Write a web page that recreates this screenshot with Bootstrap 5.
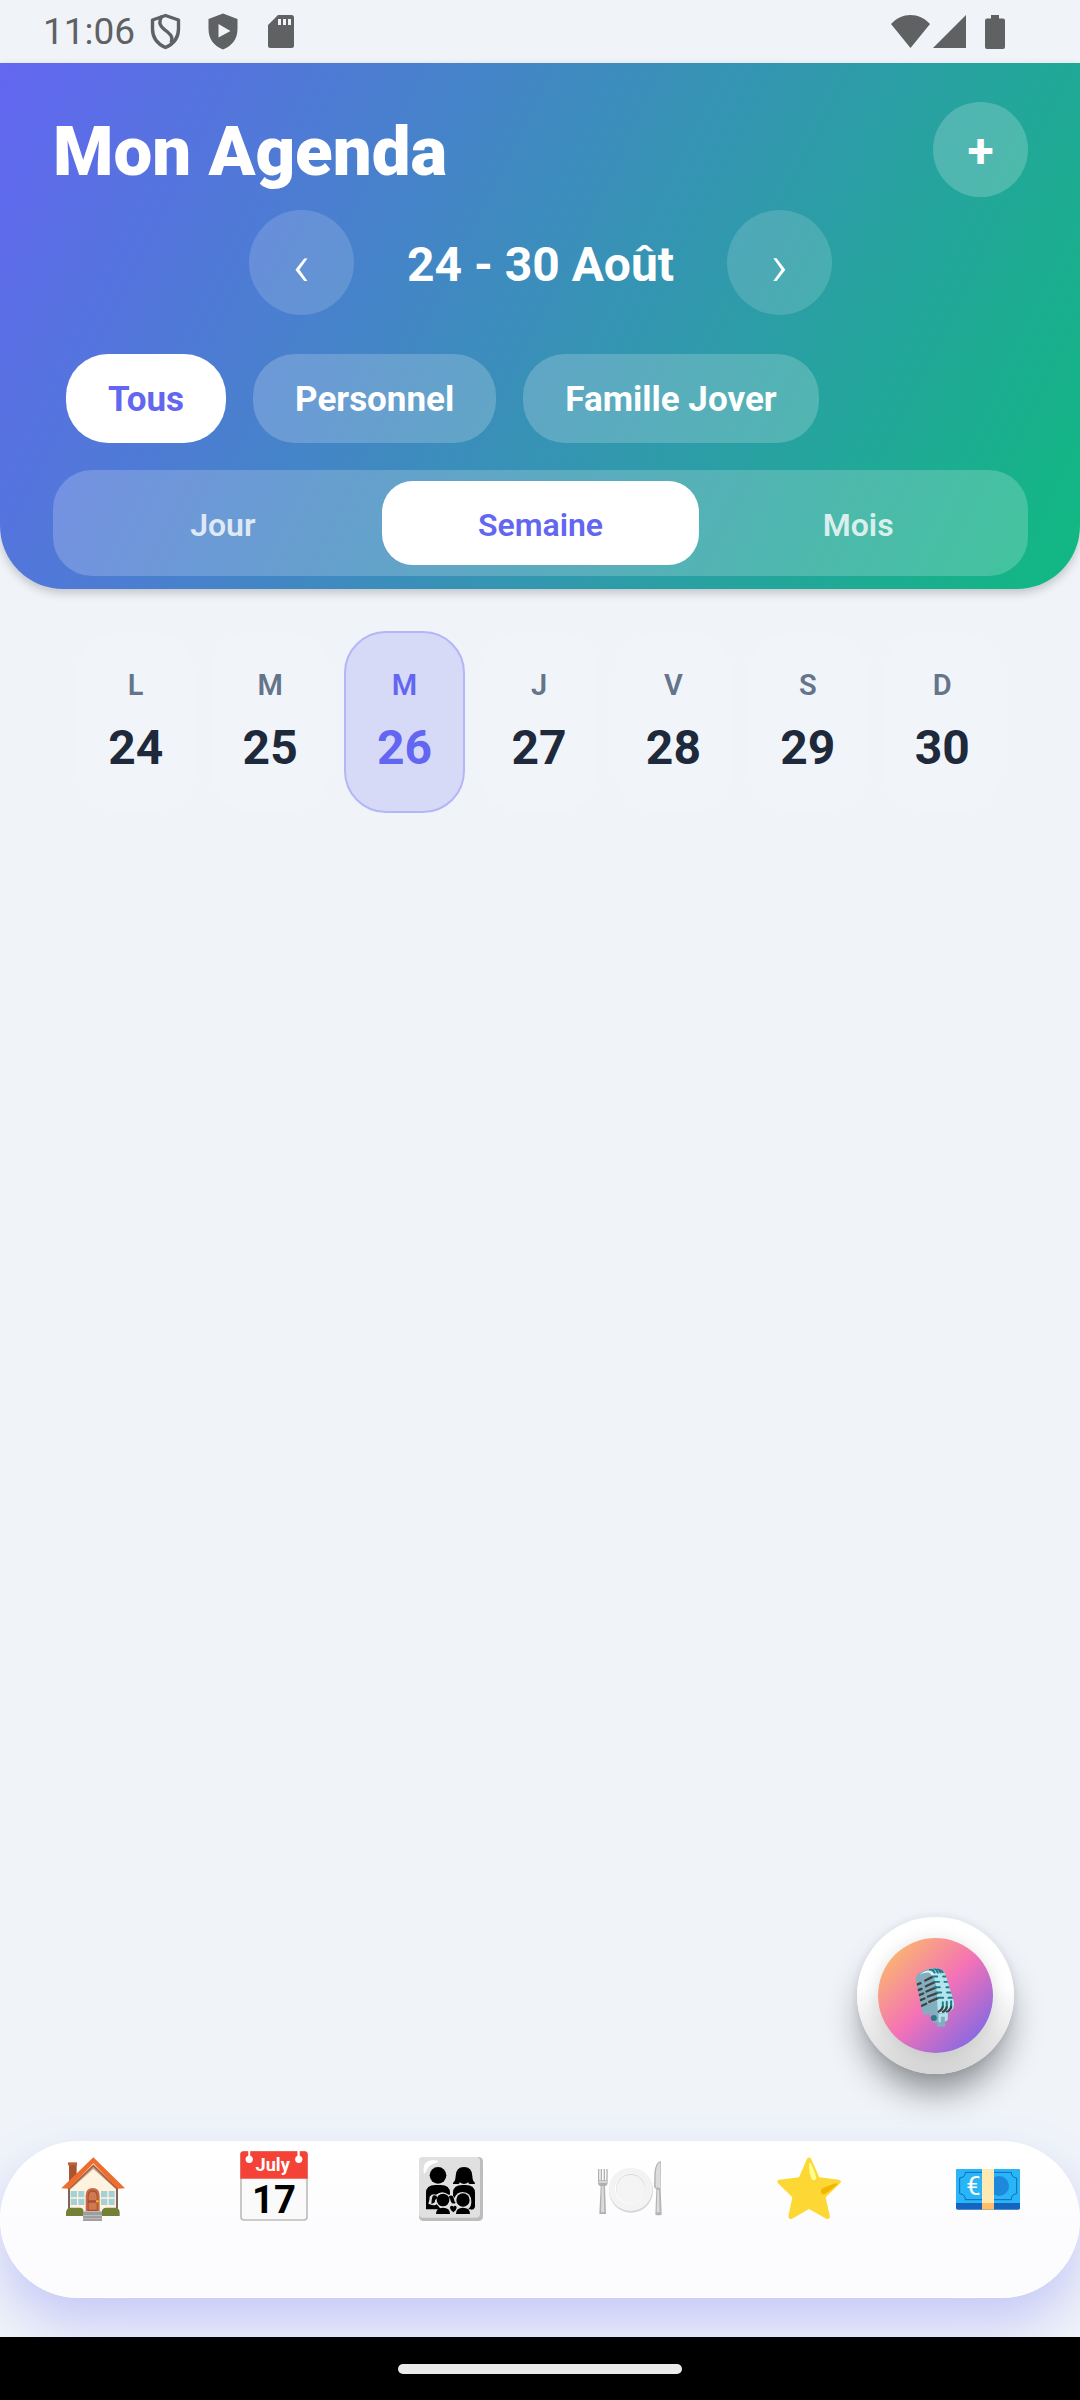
<!DOCTYPE html>
<html lang="fr">
<head>
<meta charset="utf-8">
<meta name="viewport" content="width=device-width, initial-scale=1">
<title>Mon Agenda</title>
<link href="https://cdn.jsdelivr.net/npm/bootstrap@5.3.0/dist/css/bootstrap.min.css" rel="stylesheet">
<style>
  body { background: #f0f4f9; color: #1e293b; font-family: Roboto, "Liberation Sans", sans-serif; }
  button { border: 0; background: none; padding: 0; color: inherit; }
  svg { display: block; }
  .statusbar { height: 63px; padding: 0 75px 0 43px; color: #5f6163; }
  .clock { font-size: 37px; line-height: 63px; }
  .status-icons { margin-left: 15px; }
  .agenda-head { padding: 39px 52px 13px 53px; border-radius: 0 0 63px 63px; color: #fff;
    background: linear-gradient(116deg, #6366f1, #10b981); box-shadow: 0 4px 10px rgba(0,0,0,.2); }
  .agenda-title { font-size: 69px; line-height: 80px; font-weight: 900; padding-top: 5px; }
  .round-btn { width: 105px; height: 105px; padding-top: 6px; border-radius: 50%; background: rgba(255,255,255,.15); font-size: 60px; line-height: 1; font-weight: 300; }
  .add-btn { width: 95px; height: 95px; padding-top: 2px; background: rgba(255,255,255,.2); font-size: 48px; font-weight: 700; }
  .period { margin-top: 13px; gap: 53px; }
  .period-label { font-size: 48px; line-height: 56px; font-weight: 700; padding-top: 4px; }
  .filters { margin: 39px 13px 27px; gap: 27px; }
  .filter-btn { height: 89px; padding: 4px 42px 0; border-radius: 42px; background: rgba(255,255,255,.2); font-size: 35px; font-weight: 700; }
  .views { padding: 11px; border-radius: 39px; background: rgba(255,255,255,.2); }
  .view-btn { flex: 1 1 0; height: 84px; padding-top: 4px; border-radius: 31px; font-size: 32px; font-weight: 600; color: rgba(255,255,255,.8); }
  .filter-btn.active, .view-btn.active { background: #fff; color: #6366f1; }
  .week { padding: 42px 77px 42px 75px; gap: 13px; }
  .day-btn { flex: 1 1 0; height: 182px; gap: 18px; border-radius: 42px; background: #f1f5f9; border: 2px solid #f0f4f9; }
  .day-name { font-size: 29px; line-height: 34px; font-weight: 600; color: #64748b; }
  .day-num { font-size: 48px; line-height: 56px; font-weight: 700; }
  .day-btn.active { background: #d6daf7; border-color: #b3b6f7; color: #6366f1; }
  .day-btn.active .day-name { color: #6366f1; }
  .mic-btn { position: fixed; right: 66px; bottom: 326px; width: 157px; height: 157px; border-radius: 50%; z-index: 3;
    background: linear-gradient(#fff 45%, #d6d6d6); box-shadow: 0 24px 34px -6px rgba(0,0,0,.42), 0 0 10px rgba(60,70,110,.1); }
  .mic-core { width: 115px; height: 115px; border-radius: 50%; background: linear-gradient(135deg, #fcc95c, #f472b6 50%, #6366f1);
    box-shadow: 0 4px 14px 4px rgba(110,120,115,.18); }
  .dock { height: 157px; margin-bottom: 39px; padding: 15px 2px 0; border-radius: 79px; border: 1px solid #fff;
    background: linear-gradient(#fff, #fcfcfe 60%); box-shadow: 0 26px 52px rgba(99,102,241,.3); }
  .dock-link { flex: 1 1 0; }
  .dock-current { margin-top: -6px; }
  .dock-current svg { margin-left: 5px; }
  .gesture { height: 63px; background: #000; position: relative; z-index: 2; }
  .gesture-pill { width: 284px; height: 10px; border-radius: 5px; background: #ebebeb; }
</style>
</head>
<body>
<div class="d-flex flex-column min-vh-100 overflow-hidden">
  <div class="statusbar d-flex align-items-center justify-content-between">
    <div class="d-flex align-items-center">
      <span class="clock">11:06</span>
      <svg class="status-icons" width="144" height="38" viewBox="150 13 144 38" fill="currentColor" aria-hidden="true">
        <path d="M165.500 15.500 178.500 20v9c0 9-5 15-13 18.500-8-3.500-13-9.500-13-18.500v-9z" fill="none" stroke="currentColor" stroke-width="3.400" stroke-linejoin="round"/>
        <path d="M162 16c-4 7-2 10 3 14s9 7 6 13" fill="none" stroke="currentColor" stroke-width="3.400"/>
        <path fill-rule="evenodd" d="M223 13.500 237.500 19v10c0 10-5.500 17-14.500 20.500-9-3.500-14.500-10.500-14.500-20.500V19zM218.500 24v13.500L230.500 31z"/>
        <path fill-rule="evenodd" d="M278 15h13.500q2.500 0 2.500 2.500v28q0 2.500-2.500 2.500h-21q-2.500 0-2.500-2.500V25zM278 19v6h3v-6zm5 0v6h3v-6zm5 0v6h3v-6z"/>
      </svg>
    </div>
    <svg width="114" height="36" viewBox="891 13 114 36" fill="currentColor" aria-hidden="true">
      <path d="M891 23c11-12 28-12 39 0L910.500 47z"/><path d="M966 14v33h-33z"/>
      <path d="M991 14h8v3.500h4q2 0 2 2V46q0 2-2 2h-16q-2 0-2-2V19.500q0-2 2-2h4z"/>
    </svg>
  </div>

  <header class="agenda-head">
    <div class="d-flex justify-content-between align-items-center">
      <h1 class="agenda-title mb-0">Mon Agenda</h1>
      <button type="button" class="round-btn add-btn" aria-label="Ajouter">+</button>
    </div>
    <div class="period d-flex justify-content-center align-items-center">
      <button type="button" class="round-btn" aria-label="Semaine précédente">‹</button>
      <h2 class="period-label mb-0">24 - 30 Août</h2>
      <button type="button" class="round-btn" aria-label="Semaine suivante">›</button>
    </div>
    <div class="filters d-flex">
      <button type="button" class="filter-btn active">Tous</button>
      <button type="button" class="filter-btn">Personnel</button>
      <button type="button" class="filter-btn">Famille Jover</button>
    </div>
    <div class="views d-flex">
      <button type="button" class="view-btn">Jour</button>
      <button type="button" class="view-btn active">Semaine</button>
      <button type="button" class="view-btn">Mois</button>
    </div>
  </header>

  <main class="week d-flex">
    <button type="button" class="day-btn d-flex flex-column align-items-center justify-content-center"><span class="day-name">L</span><span class="day-num">24</span></button>
    <button type="button" class="day-btn d-flex flex-column align-items-center justify-content-center"><span class="day-name">M</span><span class="day-num">25</span></button>
    <button type="button" class="day-btn active d-flex flex-column align-items-center justify-content-center"><span class="day-name">M</span><span class="day-num">26</span></button>
    <button type="button" class="day-btn d-flex flex-column align-items-center justify-content-center"><span class="day-name">J</span><span class="day-num">27</span></button>
    <button type="button" class="day-btn d-flex flex-column align-items-center justify-content-center"><span class="day-name">V</span><span class="day-num">28</span></button>
    <button type="button" class="day-btn d-flex flex-column align-items-center justify-content-center"><span class="day-name">S</span><span class="day-num">29</span></button>
    <button type="button" class="day-btn d-flex flex-column align-items-center justify-content-center"><span class="day-name">D</span><span class="day-num">30</span></button>
  </main>

  <button type="button" class="mic-btn d-flex align-items-center justify-content-center" aria-label="Commande vocale">
    <span class="mic-core">
      <svg width="115" height="115" viewBox="174 174 346 346" aria-hidden="true">
        <defs><clipPath id="micBody"><path d="M288 300q-1-14 14-23 20-12 46-12 24 1 30 22l23 75q6 24-12 34-22 9-48 4l-24 6q-9-5-12-18z"/></clipPath></defs>
        <path d="M330 398h54l-2 26q-8 6-24 5l-16 1q-10-9-12-32z" fill="#82aec0"/>
        <path d="M356 398h28v22q-4 6-14 6l-14 3z" fill="#b2e1e8"/>
        <path d="M352 428h23l2 13h-26z" fill="#82aec0"/><path d="M364 411h11v18h-12z" fill="#82aec0"/>
        <g clip-path="url(#micBody)">
          <path d="M280 260h130v150H280z" fill="#82aec0"/>
          <path d="M328 260h90v140h-64l-4-70q-2-35-22-70z" fill="#b2e5ec"/>
          <path d="M300 284q20-16 34-9 8 5 11 14l-6 6q-4-14-12-17-12-2-27 6z" fill="#e4f8fb"/>
          <g fill="none" stroke="#424242" stroke-width="7" stroke-linecap="round">
            <path d="M292 314l10-4M295 331l10-4M298 346l12-5M302 361l12-5M306 378l13-6"/>
            <path d="M316 302l22-11M318 319l26-12M320 335l28-12M324 350l28-10M328 366l26-11"/>
          </g>
          <g fill="none" stroke="#207a8c" stroke-width="6" stroke-linecap="round">
            <path d="M338 290h14M342 306h16M346 322h14M350 338h14M354 354h16"/>
            <path d="M370 290h16M374 306h18M380 322h16M382 338h18M386 354h18"/>
            <path d="M330 268q10 0 14 10M342 265q8 2 12 13M354 266q6 4 8 12M364 268l5 9"/>
            <path d="M369 367v14q-1 8-8 12M381 366v14q0 10-8 15M394 364v14q0 10-8 15"/>
          </g>
          <path d="M369 379q-1 10-15 18M381 380q-1 10-14 18M395 378q-2 13-16 20" fill="none" stroke="#424242" stroke-width="6"/>
        </g>
        <circle cx="342" cy="415" r="9" fill="#2f7889"/>
      </svg>
    </span>
  </button>

  <nav class="dock d-flex mt-auto" aria-label="Navigation principale">
    <a href="#" class="dock-link d-flex justify-content-center align-items-start" aria-label="Accueil">
      <svg width="64" height="64" viewBox="180 114 192 192" aria-hidden="true">
        <path d="M204 132h23v40l-23 22z" fill="#a9552f"/><path d="M201 130h27v9h-27z" fill="#bf6335"/>
        <path d="M201 200 277 128l74 72v72H201z" fill="#fff3e0"/>
        <path d="M203 206l74-70 74 70v10l-4-4-70-62-70 62-4 4z" fill="#bca88f"/>
        <path d="M201 205h6v64h-6zM345 205h6v64h-6z" fill="#806457"/>
        <path d="M203 209l74-72 74 72-8-1-66-65-67 65z" fill="#b4562d"/>
        <path d="M181 208 277 115l95 93-22 1-73-76-73 76z" fill="#ef6c2f"/>
        <path d="M209 216h41v42h-41zM300 216h41v42h-41z" fill="#a5d0d6"/>
        <path d="M230 216v42M209 237h41M321 216v42M300 237h41" stroke="#fff3e0" stroke-width="4"/>
        <path d="M254 276v-46q0-23 21-23t21 23v46z" fill="#c66a48"/>
        <path d="M260 276v-44q0-18 15-18t15 18v44z" fill="#a9502f"/>
        <path d="M263 244v-12q0-14 12-14t12 14v12zM263 251h24v21h-24z" fill="#cf7852"/>
        <circle cx="289" cy="247" r="4" fill="#ffb300"/>
        <path d="M195 291v-12q2-13 14-13h29q10 2 10 12v13zM302 291v-13q2-12 14-12h28q12 2 12 14v11z" fill="#728136"/>
        <path d="M246 276h57v30h-57z" fill="#9e9e9e"/><path d="M246 276h57v3h-57zM246 288h57v3h-57zM246 298h57v3h-57z" fill="#bdbdbd"/>
      </svg>
    </a>
    <a href="#" class="dock-link dock-current d-flex justify-content-center align-items-start" aria-label="Agenda" aria-current="page">
      <svg width="68" height="70" viewBox="719 93 206 212" aria-hidden="true">
        <rect x="722" y="96" width="200" height="206" rx="9" fill="#fafafa" stroke="#bdbdbd" stroke-width="5"/>
        <path d="M720 177v-74q0-9 9-9h186q9 0 9 9v74z" fill="#f44336"/>
        <path d="M744 93h6v17h-6zM893 93h7v17h-7z" fill="#fff"/><circle cx="747" cy="118" r="11" fill="#fff"/><circle cx="897" cy="118" r="11" fill="#fff"/>
        <text x="818" y="153" font-family="Roboto" font-size="55" font-weight="700" fill="#fff" text-anchor="middle">July</text>
        <text x="822" y="281" font-family="Roboto" font-size="116" font-weight="700" fill="#000" text-anchor="middle">17</text>
      </svg>
    </a>
    <a href="#" class="dock-link d-flex justify-content-center align-items-start" aria-label="Famille">
      <svg width="64" height="64" viewBox="174 111 192 192" aria-hidden="true">
        <rect x="174" y="111" width="192" height="192" rx="13" fill="#bdbdbd"/>
        <rect x="174" y="111" width="183" height="182" rx="12" fill="#e0e0e0"/>
        <path d="M188 158q-4-36 26-37 16-1 17 4-2 3-13 6-15 5-20 18-7 16-10 9z" fill="#fff"/>
        <circle cx="231" cy="166" r="25"/><path d="M276 188q7-3 8-20 1-27 25-27t25 27q1 17 8 20l-1 4h-15q-4 0-4-5-13 10-26 0 0 5-4 5h-16z"/>
        <path d="M195 268v-49q0-24 28-24h16q28 0 28 24v49zM276 268v-49q0-24 28-24h10q28 0 28 24v42q-4 11-14 7z"/>
        <path d="M202 252q4-14 4-22 8-10 19-6 19-15 38 0 13-3 17 10 8-18 24-18 27 0 27 30 0 18-15 24l12 18h-92l10-18q-9-2-14-12l-5-5q-6 6-23-1z" fill="#e0e0e0"/>
        <path d="M211 252q1-24 7-26 10-1 11 7l-7 8q2 8-11 11zM263 229q12-6 15 4 1 10 6 16-12 6-16-10z"/>
        <circle cx="246" cy="240" r="19"/><circle cx="306" cy="240" r="20"/>
        <path d="M225 282q0-19 21-19t21 19zM285 282q0-19 21-19t21 19z"/>
        <path d="M277 277q-10-8-10-14 0-6 5-6 4 0 5 4 1-4 5-4 5 0 5 6 0 6-10 14z"/>
      </svg>
    </a>
    <a href="#" class="dock-link d-flex justify-content-center align-items-start" aria-label="Repas">
      <svg width="64" height="64" viewBox="711 111 192 192" aria-hidden="true">
        <circle cx="810" cy="212" r="66" fill="#d5d5d5"/><circle cx="809" cy="208" r="65" fill="#f3f3f3"/>
        <circle cx="808" cy="207" r="46" fill="#fff"/><circle cx="809" cy="206" r="44" fill="#d9d9d9"/><circle cx="809" cy="208" r="43" fill="#f4f4f4"/>
        <path d="M711 147h4v34h4v-34h4v34h5v-34h4v34h4v-34h4v43q-1 7-8 9l3 83h-20l4-83q-8-2-8-9z" fill="#b0b0b0"/>
        <path d="M722 198h6l2 79h-10z" fill="#dadada"/><path d="M713 184h25v4h-25z" fill="#e8e8e8"/>
        <path d="M900 123q-17 1-20 37l-1 40q2 6 7 7l-3 77q9 3 19 0l-3-77z" fill="#b4b4b4"/>
        <path d="M898 127q-13 4-14 38v37l14 2zM889 210h5l2 67h-9z" fill="#dcdcdc"/>
      </svg>
    </a>
    <a href="#" class="dock-link d-flex justify-content-center align-items-start" aria-label="Favoris">
      <svg width="64" height="64" viewBox="171 110 192 192" aria-hidden="true">
        <path d="M261 115q6-7 12 0l25 56 59 7q9 3 4 10l-44 43 13 58q-1 9-10 7l-53-30-52 30q-10 1-10-8l12-57-43-42q-6-8 3-11l60-7z" fill="#fdd835"/>
        <path d="M267 130q1-6 6 0 17 36 15 46-7 8-13 0-8-16-8-46z" fill="#ffff8d"/>
        <path d="M303 208q3-6 45-19 6-1 3 4-25 21-36 28-14 3-12-13z" fill="#f4b400"/>
      </svg>
    </a>
    <a href="#" class="dock-link d-flex justify-content-center align-items-start" aria-label="Budget">
      <svg width="64" height="64" viewBox="708 111 192 192" aria-hidden="true">
        <rect x="708" y="147" width="192" height="122" rx="5" fill="#1565c0"/>
        <path d="M708 249v-97q0-5 5-5h182q5 0 5 5v97z" fill="#29b6f6"/>
        <path d="M736 157h138q0 15 16 17v47q-16 2-16 18H736q0-16-17-18v-47q17-2 17-17z" fill="none" stroke="#1565c0" stroke-width="3"/>
        <circle cx="837" cy="198" r="30" fill="#1e88dc"/>
        <text x="760" y="224" font-family="Roboto" font-size="76" font-weight="400" fill="#fff" text-anchor="middle">€</text>
        <path d="M786 147h36v102h-36z" fill="#ffe9b2"/><path d="M786 249h36v20h-36z" fill="#ffbd69"/>
      </svg>
    </a>
  </nav>
  <div class="gesture d-flex align-items-center justify-content-center"><div class="gesture-pill"></div></div>
</div>
<script src="https://cdn.jsdelivr.net/npm/bootstrap@5.3.0/dist/js/bootstrap.bundle.min.js"></script>
</body>
</html>
